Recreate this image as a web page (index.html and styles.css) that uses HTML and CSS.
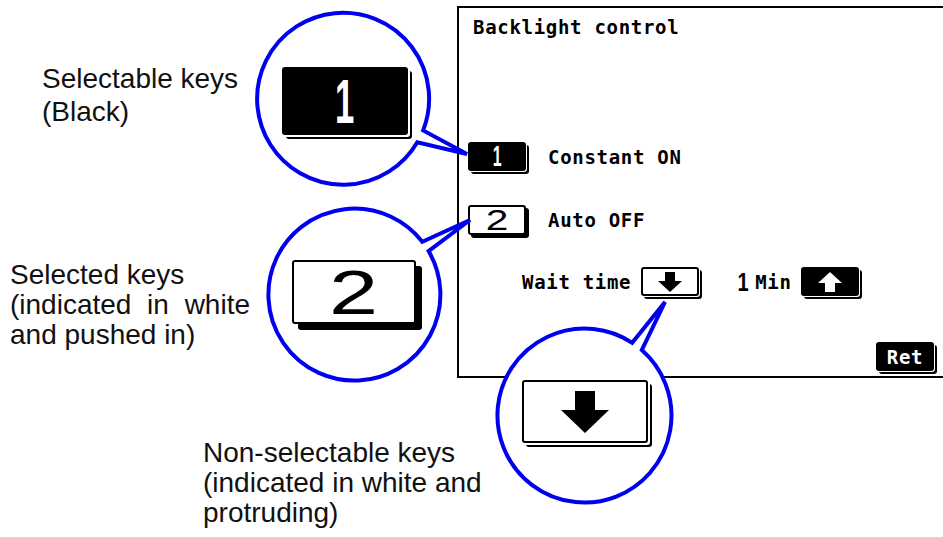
FILE: index.html
```html
<!DOCTYPE html>
<html lang="en">
	<head>
		<meta charset="UTF-8" />
		<meta name="viewport" content="width=device-width, initial-scale=1.0" />
		<title>Backlight control keys</title>
		<link rel="stylesheet" href="styles.css">
	</head>
	<body>
		<div class="stage">
			<div class="label label-black">Selectable keys<br>(Black)</div>
			<div class="label label-selected">
				<div>Selected keys</div>
				<div class="justified">(indicated in white and pushed in)</div>
			</div>
			<div class="label label-protruding">
				Non-selectable keys<br>(indicated in white and<br>protruding)
			</div>

			<!-- the screen itself, cut off at the right edge -->
			<section class="panel">
				<div class="panel-title">Backlight control</div>
				<div class="row row-constant">
					<div class="key key-on key-sm"><span class="digit-one">1</span></div>
					<span>Constant ON</span>
				</div>
				<div class="row row-auto">
					<div class="key key-pressed key-sm key-tall"><span class="digit-two">2</span></div>
					<span>Auto OFF</span>
				</div>
				<div class="row row-wait">
					<span class="wait-label">Wait time</span>
					<div class="key key-off key-sm">
						<svg class="arrow" viewBox="0 0 24 20"><polygon points="7,0 17,0 17,9 24,9 12,20 0,9 7,9" /></svg>
					</div>
					<span class="value"><span class="value-num">1</span>Min</span>
					<div class="key key-on key-sm">
						<svg class="arrow arrow-up" viewBox="0 0 24 20"><polygon points="12,0 24,11 17,11 17,20 7,20 7,11 0,11" /></svg>
					</div>
				</div>
				<div class="row row-ret">
					<div class="key key-on key-sm">Ret</div>
				</div>
			</section>

			<!-- magnified callouts -->
			<div class="callout callout-black">
				<svg class="bubble" viewBox="0 0 180 180">
					<path d="M164.3 133.3 A86 86 0 1 1 170.1 121.4 L214 145 Z" />
				</svg>
				<div class="key key-on key-lg key-lg-black"><span class="digit-one">1</span></div>
			</div>
			<div class="callout callout-selected">
				<svg class="bubble" viewBox="0 0 180 180">
					<path d="M164.6 47.1 A86 86 0 1 1 158.3 37.8 L206 16 Z" />
				</svg>
				<div class="key key-pressed key-lg key-lg-selected"><span class="digit-two">2</span></div>
			</div>
			<div class="callout callout-protruding">
				<svg class="bubble" viewBox="0 0 180 180">
					<path d="M146.8 24.1 A87 87 0 1 1 137.2 16.8 L170 -24 Z" />
				</svg>
				<div class="key key-off key-lg key-lg-off">
					<svg class="arrow arrow-lg" viewBox="0 0 24 20" preserveAspectRatio="none"><polygon points="7,0 17,0 17,9 24,9 12,20 0,9 7,9" /></svg>
				</div>
			</div>
		</div>
	</body>
</html>
```

FILE: styles.css
```css
* {
	box-sizing: border-box;
}
body {
	margin: 0;
	background: #fff;
	color: #000;
	font-family: "Liberation Sans", Arial, sans-serif;
}
.stage {
	position: relative;
	width: 943px;
	height: 537px;
	overflow: hidden;
}

/* annotation labels */
.label {
	position: absolute;
	font-size: 28px;
	line-height: 30px;
	color: #111;
}
.label-black {
	left: 42px;
	top: 62px;
	line-height: 33px;
}
.label-selected {
	left: 10px;
	top: 260px;
	width: 240px;
}
.justified {
	text-align: justify;
}
.label-protruding {
	left: 203px;
	top: 438px;
	white-space: nowrap;
}

/* screen panel */
.panel {
	position: absolute;
	left: 457px;
	top: 6px;
	width: 486px;
	height: 372px;
	border: 2px solid #000;
	border-right: none;
	font-family: "DejaVu Sans Mono", monospace;
	font-weight: bold;
	font-size: 19px;
	letter-spacing: 0.7px;
}
.panel-title {
	margin-top: 9px;
	padding-left: 14px;
	line-height: 20px;
}
.row {
	display: flex;
	align-items: center;
	line-height: 20px;
}
.row-constant {
	margin-top: 105px;
	padding-left: 9px;
	gap: 22px;
}
.row-auto {
	margin-top: 34px;
	padding-left: 9px;
	gap: 22px;
}
.row-wait {
	margin-top: 32px;
	padding-left: 63px;
}
.wait-label {
	margin-right: 10px;
}
.value {
	display: flex;
	align-items: center;
	margin-left: 37px;
	margin-right: 9px;
}
.value-num {
	display: inline-block;
	font-family: "Liberation Sans", Arial, sans-serif;
	font-size: 25px;
	margin-right: 5px;
	letter-spacing: 0;
	transform: scaleX(0.8);
}
.row-ret {
	margin-top: 46px;
	padding-right: 9px;
	justify-content: flex-end;
}

/* keys */
.key {
	position: relative;
	display: flex;
	align-items: center;
	justify-content: center;
	border-radius: 3px;
	flex-shrink: 0;
}
.key-sm {
	width: 58px;
	height: 29px;
}
.key-tall {
	height: 30px;
}
.key-on {
	background: #000;
	color: #fff;
	box-shadow: 1px 1px 0 #fff, 3px 3px 0 #000;
}
.key-pressed {
	background: #fff;
	border: 2px solid #000;
	box-shadow: 3px 3px 0 #000;
}
.key-off {
	background: #fff;
	border: 2px solid #000;
	box-shadow: 1px 1px 0 #fff, 3px 3px 0 #000;
}
.digit-one {
	display: inline-block;
	font-family: "Liberation Sans", Arial, sans-serif;
	font-weight: bold;
	font-size: 29px;
	line-height: 1;
	letter-spacing: 0;
	transform: scaleX(0.55);
}
.digit-two {
	display: inline-block;
	font-family: "Liberation Sans", Arial, sans-serif;
	font-weight: normal;
	font-size: 29px;
	line-height: 1;
	letter-spacing: 0;
	transform: scaleX(1.4);
}
.arrow {
	width: 24px;
	height: 20px;
	fill: #000;
}
.arrow-up {
	fill: #fff;
}

/* big keys inside the callouts */
.key-lg .digit-one,
.key-lg .digit-two {
	font-size: 63px;
}
.key-lg-black {
	width: 126px;
	height: 68px;
	margin: 4px 0 0 4px;
	box-shadow: 2px 2px 0 #fff, 4px 4px 0 #000;
}
.key-lg-selected {
	width: 124px;
	height: 64px;
	margin-top: -4px;
	box-shadow: 6px 6px 0 #000;
}
.key-lg-off {
	width: 126px;
	height: 63px;
	margin-top: -9px;
	box-shadow: 2px 2px 0 #fff, 4px 4px 0 #000;
}
.arrow-lg {
	width: 48px;
	height: 42px;
}

/* callout bubbles */
.callout {
	position: absolute;
	width: 180px;
	height: 180px;
	display: flex;
	align-items: center;
	justify-content: center;
}
.callout-black {
	left: 253px;
	top: 9px;
}
.callout-selected {
	left: 264px;
	top: 204px;
}
.callout-protruding {
	left: 495px;
	top: 326px;
}
.bubble {
	position: absolute;
	left: 0;
	top: 0;
	width: 180px;
	height: 180px;
	overflow: visible;
}
.bubble path {
	fill: #fff;
	stroke: #0000f0;
	stroke-width: 4;
}
```
